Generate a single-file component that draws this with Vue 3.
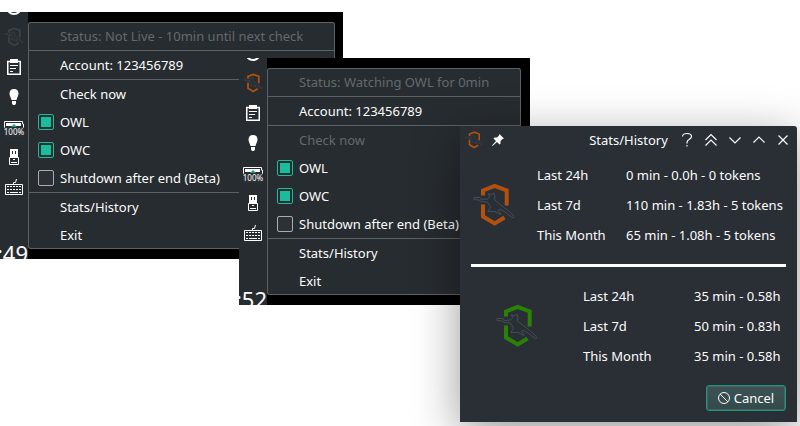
<script setup>
import { reactive } from 'vue'

const trays = reactive([
  {
    id: 'idle',
    tone: 'off',
    clock: ':49',
    status: 'Status: Not Live - 10min until next check',
    checking: false,
    options: [
      { name: 'OWL', on: true },
      { name: 'OWC', on: true },
      { name: 'Shutdown after end (Beta)', on: false },
    ],
  },
  {
    id: 'watching',
    tone: 'orange',
    clock: ':52',
    status: 'Status: Watching OWL for 0min',
    checking: true,
    options: [
      { name: 'OWL', on: true },
      { name: 'OWC', on: true },
      { name: 'Shutdown after end (Beta)', on: false },
    ],
  },
])

const stats = [
  {
    id: 'owl',
    tone: 'orange',
    rows: [
      ['Last 24h', '0 min - 0.0h - 0 tokens'],
      ['Last 7d', '110 min - 1.83h - 5 tokens'],
      ['This Month', '65 min - 1.08h - 5 tokens'],
    ],
  },
  {
    id: 'owc',
    tone: 'green',
    rows: [
      ['Last 24h', '35 min - 0.58h'],
      ['Last 7d', '50 min - 0.83h'],
      ['This Month', '35 min - 0.58h'],
    ],
  },
]

const controls = [
  { id: 'Help', d: 'M3.500 4.500C3.500 .5 12.500 .5 12.500 4.500C12.500 7.500 8 7 8 10.500V11.500M8 13V14.500' },
  { id: 'Keep above', d: 'M2.500 8L8 2.500L13.500 8M2.500 13.500L8 8L13.500 13.500' },
  { id: 'Minimize', d: 'M2.500 5.500L8 11L13.500 5.500' },
  { id: 'Maximize', d: 'M2.500 10.500L8 5L13.500 10.500' },
  { id: 'Close', d: 'M3.500 3.500L12.500 12.500M12.500 3.500L3.500 12.500' },
]
</script>

<template>
  <main class="desktop">
    <svg class="defs" width="0" height="0" aria-hidden="true">
      <symbol id="emblem" viewBox="0 0 44 44">
        <path d="M11 12.500V7.500L22.700 3L34.700 7.500V22.500M11 21.500V33.500L22.700 40.500L32.500 34.500" fill="none" stroke="currentColor" stroke-width="4" />
        <path d="M2 14.500H8L9 16.500L15.500 16L17.500 14L16.500 10.500L19 12L22 10L23 14L22.500 17L27 20.500L34 26L39 30L42 33.500L41 35L38 33L33 29L28 26L26.500 27L29 31.500L23 28.500L16 28.500L18.500 24L15.500 19L9 18.500L7 17L2 16.500Z" fill="#2a2e35" stroke="#45525b" stroke-width=".9" />
      </symbol>
    </svg>

    <section v-for="tray in trays" :key="tray.id" class="tray" :class="tray.id">
      <div class="panel">
        <div class="slot peek">
          <svg width="16" height="16" viewBox="0 0 16 16"><circle cx="8" cy="8" r="7" fill="none" stroke="#fff" stroke-width="2" /></svg>
        </div>
        <div class="slot" :class="tray.tone">
          <svg width="20" height="20"><use href="#emblem" /></svg>
        </div>
        <div class="slot">
          <svg width="14" height="16" viewBox="0 0 14 16">
            <path d="M.75 2.500H13.250V15.250H.75Z" fill="none" stroke="#fff" stroke-width="1.500" />
            <path d="M3 0H11V4H3ZM3 6H11V7H3ZM3 9H9V10H3ZM3 12H6V13H3Z" fill="#fff" />
          </svg>
        </div>
        <div class="slot">
          <svg width="10" height="16" viewBox="0 0 10 16">
            <path d="M5 0C8 0 9.500 2 9.500 4.500C9.500 7 8 8.500 7.500 11H2.500C2 8.500.5 7 .5 4.500C.5 2 2 0 5 0ZM3 12H7V14.500L6 16H4L3 14.500Z" fill="#fff" />
          </svg>
        </div>
        <div class="slot battery">
          <svg width="20" height="8" viewBox="0 0 20 8">
            <path d="M.5 8V.5H18.500V3H19.500V7" fill="none" stroke="#fff" />
            <path d="M2 2H17V5H2Z" fill="#fff" />
            <path d="M7 6L10 3L13 6Z" fill="#1a9c82" />
          </svg>
          <span>100%</span>
        </div>
        <div class="slot">
          <svg width="10" height="16" viewBox="0 0 10 16">
            <path fill-rule="evenodd" d="M1 0H9V8H1ZM3 2V5H4V2ZM6 2V5H7V2Z" fill="#fff" />
            <path d="M.5 8.500H9.500V15.500H.5ZM2 13.500H8M4 10.500H6" fill="none" stroke="#fff" />
          </svg>
        </div>
        <div class="slot">
          <svg width="18" height="16" viewBox="0 0 18 16">
            <path d="M.5 5.500H17.500V15.500H.5ZM8.500 5V3.500H10.500L11.500 0" fill="none" stroke="#fff" />
            <path d="M2 7.500H16M2 10.500H16" stroke="#fff" stroke-dasharray="2 1" />
            <path d="M2 13.500H4M5 13.500H13M14 13.500H16" stroke="#fff" />
          </svg>
        </div>
        <time class="clock">{{ tray.clock }}</time>
      </div>

      <div class="menu">
        <div class="item muted">{{ tray.status }}</div>
        <button class="item ruled">Account: 123456789</button>
        <button class="item ruled" :class="{ muted: tray.checking }" :disabled="tray.checking">Check now</button>
        <label v-for="option in tray.options" :key="option.name" class="item option">
          <input v-model="option.on" type="checkbox" />
          <span>{{ option.name }}</span>
        </label>
        <button class="item ruled">Stats/History</button>
        <button class="item">Exit</button>
      </div>
    </section>

    <section class="dialog">
      <header class="titlebar">
        <div class="side">
          <div class="cap orange"><svg width="18" height="18"><use href="#emblem" /></svg></div>
          <button class="cap" aria-label="Pin">
            <svg width="12" height="12" viewBox="0 0 12 12">
              <path d="M7.500 0L12 4.500L10.500 5L8.500 7L8.500 9.500L7.500 10.500L5 8L.5 12L0 11.500L4 7L1.500 4.500L2.500 3.500L5 3.500L7 1.500Z" fill="#fcfcfc" />
            </svg>
          </button>
        </div>
        <h1>Stats/History</h1>
        <div class="side end">
          <button v-for="c in controls" :key="c.id" class="cap" :aria-label="c.id">
            <svg width="16" height="16" viewBox="0 0 16 16">
              <path :d="c.d" fill="none" stroke="#fcfcfc" stroke-width="1.200" />
            </svg>
          </button>
        </div>
      </header>

      <div class="body">
        <template v-for="(group, i) in stats" :key="group.id">
          <hr v-if="i > 0" />
          <div class="group" :class="group.id">
            <div class="logo" :class="group.tone"><svg width="44" height="44"><use href="#emblem" /></svg></div>
            <table>
              <tbody>
                <tr v-for="row in group.rows" :key="row[0]">
                  <th scope="row">{{ row[0] }}</th>
                  <td>{{ row[1] }}</td>
                </tr>
              </tbody>
            </table>
          </div>
        </template>
        <footer>
          <button class="cancel">
            <svg width="12" height="12" viewBox="0 0 12 12">
              <path d="M2 2L10 10M6 .5A5.500 5.500 0 1 1 6 11.500A5.500 5.500 0 1 1 6 .5Z" fill="none" stroke="#fcfcfc" />
            </svg>
            Cancel
          </button>
        </footer>
      </div>
    </section>
  </main>
</template>

<style>
body {
  margin: 0;
  background: #fff;
}
</style>

<style scoped>
.desktop {
  position: relative;
  min-height: 100vh;
  overflow: hidden;
  background: #fff;
  color: #fcfcfc;
  font: 13px/20px "Noto Sans", sans-serif;
}
.defs {
  position: absolute;
}
button {
  margin: 0;
  padding: 0;
  border: 0;
  background: none;
  color: inherit;
  font: inherit;
  text-align: left;
}
svg {
  display: block;
}
.off {
  color: #3c4145;
}
.orange {
  color: #b2500f;
}
.green {
  color: #2a8205;
}

.tray {
  position: absolute;
  display: flex;
  align-items: stretch;
  overflow: hidden;
  background: #000;
}
.tray.idle {
  left: 0;
  top: 12px;
  padding-right: 8px;
}
.tray.watching {
  left: 239px;
  top: 58px;
  padding-right: 9px;
}
.panel {
  display: flex;
  flex-direction: column;
  width: 28px;
  background: #272c30;
}
.slot {
  display: flex;
  align-items: center;
  justify-content: center;
  height: 30px;
}
.slot.peek {
  height: 10px;
  align-items: flex-start;
}
.peek svg {
  margin-top: -13px;
}
.battery {
  box-sizing: border-box;
  flex-direction: column;
  padding-top: 4px;
}
.battery span {
  margin-top: -2px;
  border-radius: 2px;
  background: #2b3034;
  font-size: 8px;
  line-height: 10px;
}
.clock {
  display: flex;
  justify-content: flex-end;
  height: 0;
  padding-top: 36px;
  font-size: 22px;
  line-height: 30px;
}
.menu {
  margin: 10px 0;
  border-radius: 3px;
  background: #272c30;
  box-shadow: inset 0 0 0 1px #5c6164;
}
.idle .menu {
  width: 307px;
}
.watching .menu {
  width: 254px;
}
.item {
  display: flex;
  align-items: center;
  box-sizing: content-box;
  width: calc(100% - 32px);
  height: 28px;
  padding-left: 32px;
  white-space: nowrap;
}
.ruled {
  border-top: 1px solid #5c6164;
}
.muted {
  color: #65696c;
}
.option {
  gap: 6px;
  width: calc(100% - 10px);
  padding-left: 10px;
}
.option input {
  appearance: none;
  box-sizing: border-box;
  width: 16px;
  height: 16px;
  margin: 0;
  padding: 2px;
  border: 1px solid #a9acae;
  border-radius: 2px;
  background: #2d3137;
}
.option input:checked {
  border-color: #1abc9c;
  background: #1abc9c content-box;
}

.dialog {
  position: absolute;
  left: 460px;
  top: 126px;
  width: 337px;
  border-radius: 3px 3px 0 0;
  background: #2a2e35;
  box-shadow: 0 12px 48px rgba(0, 0, 0, 0.4);
}
.titlebar {
  display: grid;
  grid-template-columns: 1fr auto 1fr;
  align-items: center;
  height: 28px;
  padding: 0 2px;
}
.side {
  display: flex;
}
.end {
  justify-content: flex-end;
}
.cap {
  display: flex;
  align-items: center;
  justify-content: center;
  width: 24px;
  height: 24px;
}
h1 {
  margin: 0;
  font: inherit;
}
.body {
  display: flex;
  flex-direction: column;
  gap: 14px;
  padding: 6px 11px 11px;
}
.group {
  display: flex;
  align-items: center;
  gap: 20px;
}
.logo {
  display: flex;
  justify-content: center;
  width: 46px;
}
.owc .logo {
  width: 92px;
}
table {
  border-collapse: collapse;
}
th,
td {
  height: 30px;
  padding: 0;
  font-weight: 400;
  text-align: left;
  white-space: nowrap;
}
th {
  width: 89px;
}
.owc th {
  width: 111px;
}
hr {
  width: 100%;
  height: 3px;
  margin: 0;
  border: 0;
  background: #fff;
}
footer {
  display: flex;
  justify-content: flex-end;
}
.cancel {
  display: flex;
  align-items: center;
  justify-content: center;
  gap: 4px;
  width: 80px;
  height: 26px;
  border: 1px solid #1a9880;
  border-radius: 3px;
  background: linear-gradient(#3d5254, #334a4b);
  box-shadow: inset 0 0 0 1px #4b6062;
}
</style>
